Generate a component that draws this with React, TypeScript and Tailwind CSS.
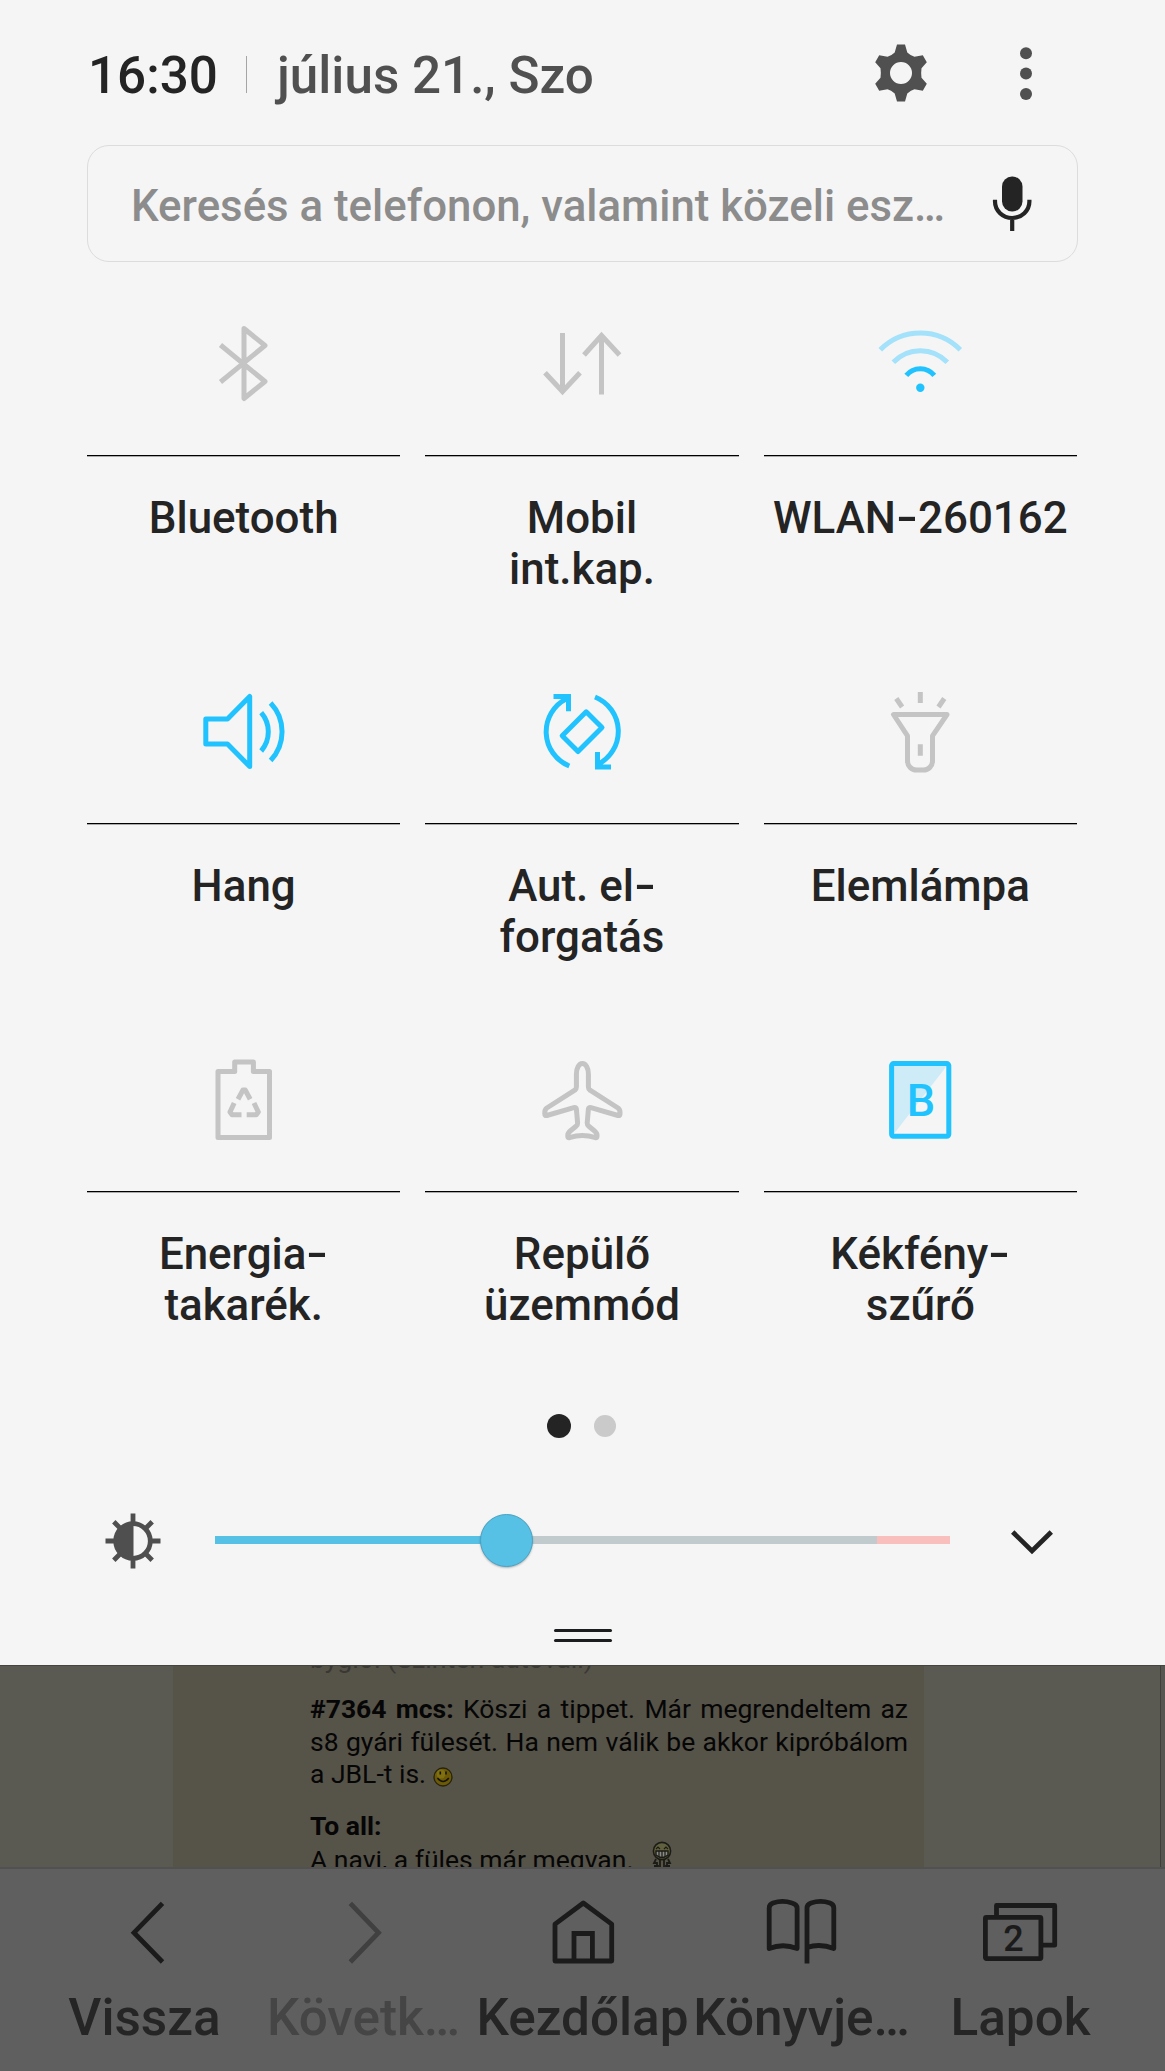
import type { ReactNode } from 'react';

type Tile = {
  lines: string[];
  active: boolean;
  icon: ReactNode;
};

// All tile icons share an 84x84 box and inherit their stroke colour
const tiles: Tile[] = [
  {
    lines: ['Bluetooth'],
    active: false,
    icon: <path d="M18.5 24L63 60.5L42 77.5V7.5L63 24.5L18.5 61" strokeLinejoin="round" />,
  },
  {
    lines: ['Mobil', 'int.kap.'],
    active: false,
    icon: <path d="M22.5 12V70M5 51.7L22.5 70.5L40 51.7M61.5 73.5V15M44 34L61.5 14.5L79.5 34" />,
  },
  {
    lines: ['WLAN-260162'],
    active: true,
    icon: (
      <>
        <path d="M2.3 28.7A56 56 0 0 1 82.3 28.7M15.3 41.3A37.2 37.2 0 0 1 69.3 41.3" stroke="#a3e2fa" />
        <path d="M28.3 54.3A18.1 18.1 0 0 1 56.3 54.3" />
        <circle cx="42.3" cy="66.7" r="4.2" fill="currentColor" stroke="none" />
      </>
    ),
  },
  {
    lines: ['Hang'],
    active: true,
    icon: (
      <>
        <path d="M3.8 30H25.5L47.7 7.5V77.5L25.5 55H3.8Z" strokeLinejoin="round" />
        <path d="M59.2 23.7A29.3 29.3 0 0 1 59.2 62M68.6 14A41.8 41.8 0 0 1 68.6 71.5" />
      </>
    ),
  },
  {
    lines: ['Aut. el-', 'forgatás'],
    active: true,
    icon: (
      <>
        <path d="M26.5 9.8A36.9 36.9 0 0 0 29.3 77M13.5 7.4H28.5V22.3" />
        <path d="M55 8A36.9 36.9 0 0 1 57.5 75.5M57.5 63V78H71" />
        <path d="M46.2 22.8l15.8 15.8-24 24-15.8-15.8z" strokeLinejoin="round" />
      </>
    ),
  },
  {
    lines: ['Elemlámpa'],
    active: false,
    icon: (
      <>
        <path d="M15.5 25.5H69L54.5 46.8V72a9 9 0 0 1-9 9h-7a9 9 0 0 1-9-9V46.8Z" strokeLinejoin="round" />
        <path d="M42.3 3V14M18.3 9.5l5.8 8.5M66.3 9.5l-5.8 8.5M42.3 55.3V66.7" />
      </>
    ),
  },
  {
    lines: ['Energia-', 'takarék.'],
    active: false,
    icon: (
      <>
        <path d="M16 14.5H32.7V5H51.4V14.5H67.5V80.5H16Z" strokeLinejoin="round" />
        <path d="M36 42.3L41 33H43.2L48.2 42.3M32.2 46L28 55L30 57.7H39.5M52 46L56.3 55L54.3 57.7H44.7" strokeLinejoin="round" />
      </>
    ),
  },
  {
    lines: ['Repülő', 'üzemmód'],
    active: false,
    icon: (
      <path
        strokeLinejoin="round"
        d="M36.4 30V17C36.4 11 39 6.5 42.4 6.5C45.8 6.5 48.4 11 48.4 17V30Q48.4 32 50 33.2L78 51Q80 52.5 80 55V57Q80 59 78 58.5L51 50.7Q48.6 50 48.4 52L47.2 66Q47.2 68 48.5 69L54 73.5Q57 76 57 78V79.5Q57 81 55.5 80.7Q48.5 78.5 42.4 78.5Q36.3 78.5 29.3 80.7Q27.8 81 27.8 79.5V78Q27.8 76 30.8 73.5L36.3 69Q37.6 68 37.6 66L36.4 52Q36.2 50 33.8 50.7L6.8 58.5Q4.8 59 4.8 57V55Q4.8 52.5 6.8 51L34.8 33.2Q36.4 32 36.4 30Z"
      />
    ),
  },
  {
    lines: ['Kékfény-', 'szűrő'],
    active: true,
    icon: (
      <>
        <path d="M15 8H69.5L15 78Z" fill="#cdecf7" stroke="none" />
        <rect x="13.6" y="6.6" width="57.2" height="72.6" rx="2" />
        <text x="43" y="59" textAnchor="middle" fontSize="45" fontWeight="500" fill="currentColor" stroke="none">B</text>
      </>
    ),
  },
];

const navItems = [
  {
    label: 'Vissza',
    disabled: false,
    icon: <path d="M60.5 13.3L32 42.7L60.5 72" />,
  },
  {
    label: 'Követk…',
    disabled: true,
    icon: <path d="M29.3 13.3L57.5 42.7L29.3 72" />,
  },
  {
    label: 'Kezdőlap',
    disabled: false,
    icon: (
      <>
        <path d="M43.3 13L71.7 34.2V71H15V34.2Z" strokeLinejoin="round" />
        <path d="M34 71V43.5H52.4V71" />
      </>
    ),
  },
  {
    label: 'Könyvje…',
    disabled: false,
    icon: (
      <>
        <path d="M10.2 58.5V18Q10.2 14.5 14 13Q23.5 9.8 33 13Q38.1 14.5 38.1 18V58.5Q24 53 10.2 58.5Z" strokeLinejoin="round" />
        <path d="M48 73.4V18Q48 14.5 52 13Q61.5 9.8 71 13Q74.8 14.5 74.8 18V58.5Q61 53 48 57.5" strokeLinejoin="round" />
      </>
    ),
  },
  {
    label: 'Lapok',
    disabled: false,
    icon: (
      <>
        <path d="M18.5 26V15.5H76.7V55.2H64" strokeLinejoin="round" />
        <rect x="7.4" y="27.4" width="55.5" height="41.2" rx="1" />
        <text x="35.4" y="60.6" textAnchor="middle" fontSize="36" fontWeight="500" fill="currentColor" stroke="none">2</text>
      </>
    ),
  },
];

// Hyphens are drawn a little wider and higher than the font's own
function Label({ text }: { text: string }) {
  return (
    <>
      {text.split(/(-)/).map((part, i) =>
        part === '-' ? (
          <span key={i} className="inline-block w-[22px] origin-center -translate-y-px scale-x-[1.42] text-center">-</span>
        ) : (
          part
        )
      )}
    </>
  );
}

function Header() {
  return (
    <div className="flex h-[145px] items-start pr-[103px] pl-[88px]">
      <span className="mt-[46px] w-[158px] text-[51.2px] leading-[60px] font-medium text-[#242424]">16:30</span>
      <span className="mt-[56px] h-[37px] w-px bg-[#a5a5a5]" />
      <span className="mt-[46px] ml-[30px] flex-1 text-[51.2px] leading-[60px] font-medium whitespace-nowrap text-[#505050]">
        július 21., Szo
      </span>
      <svg className="mt-[43px] h-[60px] w-[60px] text-[#505050]" viewBox="-30 -30 60 60" fill="currentColor">
        <path
          fillRule="evenodd"
          d="M-4 -28.5H4L6.3 -20.5Q10 -17 13.5 -16.2L21.8 -17.7L25.8 -10.8L20.5 -4.8Q19.8 0 20.5 4.8L25.8 10.8L21.8 17.7L13.5 16.2Q10 17 6.3 20.5L4 28.5H-4L-6.3 20.5Q-10 17 -13.5 16.2L-21.8 17.7L-25.8 10.8L-20.5 4.8Q-19.8 0 -20.5 -4.8L-25.8 -10.8L-21.8 -17.7L-13.5 -16.2Q-10 -17 -6.3 -20.5ZM11 0A11 11 0 1 0 -11 0A11 11 0 1 0 11 0Z"
        />
      </svg>
      <svg className="mt-[43px] ml-[59px] h-[60px] w-[72px] text-[#505050]" viewBox="0 0 72 60" fill="currentColor">
        <circle cx="36" cy="10.3" r="6" />
        <circle cx="36" cy="30.5" r="6" />
        <circle cx="36" cy="51" r="6" />
      </svg>
    </div>
  );
}

function SearchBar() {
  return (
    <div className="mr-[87px] ml-[87px] flex h-[117px] items-center rounded-[22px] border border-[#dcdcdc] pr-[44px] pl-[43px]">
      <span className="flex-1 pt-[5px] text-[43.8px] leading-[51px] font-medium whitespace-nowrap text-[#8c8c8c]">
        Keresés a telefonon, valamint közeli esz…
      </span>
      <svg className="h-[58px] w-[42px] text-[#242424]" viewBox="0 0 42 58" fill="none" stroke="currentColor">
        <rect x="11" y="1.5" width="20.5" height="35" rx="10" fill="currentColor" stroke="none" />
        <path d="M4 24.7V26.5A17.2 16.5 0 0 0 38.4 26.5V24.7M21.2 43V56" strokeWidth="4.2" />
      </svg>
    </div>
  );
}

function QuickTile({ tile }: { tile: Tile }) {
  return (
    <div className="flex h-[368px] flex-col items-center pt-[17px]">
      <svg
        className={tile.active ? 'h-[84px] w-[84px] shrink-0 text-[#21c3ff]' : 'h-[84px] w-[84px] shrink-0 text-[#c4c4c4]'}
        viewBox="0 0 84 84"
        fill="none"
        stroke="currentColor"
        strokeWidth="5"
        overflow="visible"
      >
        {tile.icon}
      </svg>
      <div className="mt-[50px] h-px w-full shrink-0 bg-black shadow-[0_1px_0_rgba(0,0,0,0.3)]" />
      <div className="mt-[37px] text-center text-[43.9px] leading-[51px] font-medium whitespace-nowrap text-[#242424]">
        {tile.lines.map((line) => (
          <div key={line}>
            <Label text={line} />
          </div>
        ))}
      </div>
    </div>
  );
}

function Brightness() {
  return (
    <div className="flex h-[60px] items-center pl-[103px]">
      <svg className="h-[60px] w-[60px] text-[#4f4f4f]" viewBox="-30 -31 60 60" fill="none" stroke="currentColor" strokeWidth="4.8">
        <circle r="17.3" />
        <path d="M0.5 -17.3A17.3 17.3 0 0 0 0.5 17.3Z" fill="currentColor" stroke="none" />
        <path d="M0 -27.5V-18M0 18V27.5M-27.5 0H-18M18 0H27.5M-19.2 -19.2L-12 -12M19.2 -19.2L12 -12M-19.2 19.2L-12 12M19.2 19.2L12 12" />
      </svg>
      <div className="relative ml-[52px] flex h-[8px] w-[735px]">
        <div className="w-[291px] bg-[#57c0e5]" />
        <div className="w-[371px] bg-[#c1cbce]" />
        <div className="flex-1 bg-[#f8bfbd]" />
        <div className="absolute top-[-22px] left-[264.5px] h-[53px] w-[53px] rounded-full border-[1.5px] border-[#47a3c4] bg-[#57c0e5] shadow-[0_1px_2px_rgba(0,0,0,0.25)]" />
      </div>
      <svg className="ml-[60px] h-[40px] w-[44px]" viewBox="0 0 44 40" fill="none" stroke="#242424" strokeWidth="4.8">
        <path d="M2.7 12L22 31L41.3 12" />
      </svg>
    </div>
  );
}

function ForumPage() {
  return (
    <div className="flex h-[202px] overflow-hidden border-t border-[#45443f] bg-[#5a5952]">
      <div className="ml-[173px] h-full w-[751px] bg-[#565349] pr-[16px] pl-[137px] text-[26.5px] leading-[32.4px] text-[#060606]">
        <div className="-mt-[23px] text-[26.7px] text-[#393833]">bygloi (Szinten autóvall)</div>
        <div className="mt-[18px] w-[598px] text-justify [text-align-last:justify]">
          <b>#7364 mcs:</b> Köszi a tippet. Már megrendeltem az
        </div>
        <div className="w-[598px] whitespace-nowrap [text-align-last:justify]">s8 gyári fülesét. Ha nem válik be akkor kipróbálom</div>
        <div className="flex items-center">
          a JBL-t is.
          <svg className="mt-[5px] ml-[7px] h-[20px] w-[20px]" viewBox="0 0 20 20">
            <circle cx="10" cy="10" r="9" fill="#6d5a06" stroke="#27230d" strokeWidth="1.3" />
            <circle cx="8" cy="7" r="4.5" fill="#807010" />
            <path d="M7.3 4.5V7.5M13 4.5V7.5M4.5 11Q10 18 15.8 11" fill="none" stroke="#15130a" strokeWidth="1.6" />
          </svg>
        </div>
        <div className="mt-[19px] font-bold">To all:</div>
        <div className="mt-[2px] flex">
          A navi, a füles már megvan.
          <svg className="-mt-[3px] ml-[19px] h-[30px] w-[20px]" viewBox="0 0 20 30">
            <circle cx="10" cy="10" r="8.6" fill="#62613f" stroke="#1c1c16" strokeWidth="1.6" />
            <path d="M4 8L6 6L8 8M12 8L14 6L16 8" fill="none" stroke="#1c1c16" strokeWidth="1.2" />
            <path d="M4 10H16V14Q10 19 4 14Z" fill="#8a8a86" stroke="#1c1c16" strokeWidth="1.4" />
            <path d="M7 10V16M10 10V17M13 10V16" stroke="#1c1c16" strokeWidth="1.2" />
            <path d="M4 18L2 22H5V25M16 18L18 22H15V25M8 18V30M12 18V30M2 25H6V30M18 25H14V30" fill="none" stroke="#1c1c16" strokeWidth="1.8" />
          </svg>
        </div>
      </div>
      <div className="ml-auto w-[5px] border-l border-[#40403b] bg-[#575650]" />
    </div>
  );
}

function BrowserBar() {
  return (
    <div className="grid h-[204px] grid-cols-5 border-t-2 border-[#515151] bg-[#5f5f5f] px-[35px]">
      {navItems.map((item) => (
        <div key={item.label} className="flex flex-col items-center pt-[21px]">
          <svg
            className={item.disabled ? 'h-[86px] w-[86px] shrink-0 text-[#404040]' : 'h-[86px] w-[86px] shrink-0 text-[#1b1b1b]'}
            viewBox="0 0 86 86"
            fill="none"
            stroke="currentColor"
            strokeWidth="4.8"
          >
            {item.icon}
          </svg>
          <span
            className={
              item.disabled
                ? 'mt-[12px] text-[51.3px] leading-[60px] font-medium whitespace-nowrap text-[#454545]'
                : 'mt-[12px] text-[51.3px] leading-[60px] font-medium whitespace-nowrap text-[#252525]'
            }
          >
            {item.label}
          </span>
        </div>
      ))}
    </div>
  );
}

export default function App() {
  return (
    <div className="h-[2071px] w-[1165px] overflow-hidden bg-[#5f5f5f] font-['Roboto',sans-serif]">
      <div className="h-[1665px] bg-[#f5f5f5]">
        <Header />
        <SearchBar />

        <div className="mr-[88px] ml-[87px] mt-[42px] grid grid-cols-3 gap-x-[25px]">
          {tiles.map((tile) => (
            <QuickTile key={tile.lines[0]} tile={tile} />
          ))}
        </div>

        {/* Page indicator */}
        <div className="mt-[6px] flex h-[24px] items-center pl-[547px]">
          <div className="h-[24px] w-[24px] rounded-full bg-[#242424]" />
          <div className="ml-[23px] h-[22px] w-[22px] rounded-full bg-[#cacaca]" />
        </div>

        <div className="mt-[72px]">
          <Brightness />
        </div>

        {/* Drag handle */}
        <div className="mx-auto mt-[59px] flex w-[58px] flex-col gap-[7px]">
          <div className="h-[3px] rounded-full bg-[#1c1d1f]" />
          <div className="h-[3px] rounded-full bg-[#1c1d1f]" />
        </div>
      </div>

      <ForumPage />
      <BrowserBar />
    </div>
  );
}
